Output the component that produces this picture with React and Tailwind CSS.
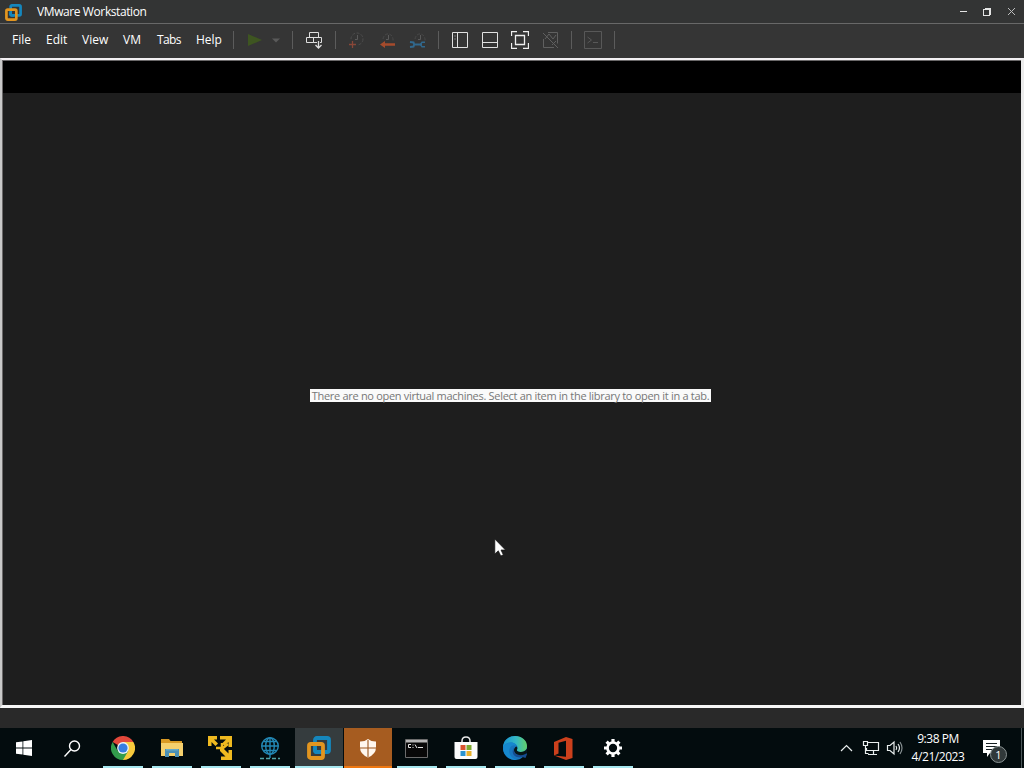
import clsx from 'clsx';

const menuItems = [
  { label: 'File', cell: 'w-[34px]' },
  { label: 'Edit', cell: 'w-[36px]' },
  { label: 'View', cell: 'w-[41px]' },
  { label: 'VM', cell: 'w-[34px]' },
  { label: 'Tabs', cell: 'w-[39px] tracking-[-0.6px]' },
  { label: 'Help', cell: 'w-[37px]' }
];

function Separator({ className }) {
  return (
    <div className={clsx('shrink-0', className)}>
      <div className="w-px h-[18px] bg-[#5c5c5c]" />
    </div>
  );
}

function Tool({ className, size = 18, children }) {
  return (
    <button className={clsx('shrink-0 flex items-center', className)}>
      <svg width={size} height={size} viewBox={`0 0 ${size} ${size}`} fill="none" className="shrink-0">
        {children}
      </svg>
    </button>
  );
}

function VMwareLogo({ size }) {
  return (
    <svg width={size} height={size} viewBox="0 0 24 24" fill="none" strokeWidth="3.8">
      <rect x="8" y="2" width="14" height="14" rx="1.8" stroke="#1587bd" />
      <rect x="2" y="8" width="14" height="14" rx="1.8" stroke="#e2951f" />
      <path d="M8 11.500v2.700q0 1.800 1.800 1.800h3" stroke="#1587bd" />
    </svg>
  );
}

function TitleBar() {
  return (
    <header className="h-[24px] flex items-center bg-[#333434] border-b border-[#686868] text-white">
      <div className="w-[37px] pl-[5px] pt-px">
        <VMwareLogo size={17} />
      </div>
      <h1 className="flex-1 text-[12px] leading-[24px] tracking-[-0.4px]">VMware Workstation</h1>
      <svg width="72" height="22" viewBox="0 0 72 22" fill="none" stroke="#e4e4e4" shapeRendering="crispEdges">
        <path d="M8 10.5h7" />
        <path d="M31.5 8.5h6v6h-6zM32.500 7.500h6v6" />
        <path d="M56 7l7 7M63 7l-7 7" shapeRendering="auto" stroke="#bdbdbd" />
      </svg>
    </header>
  );
}

function Toolbar() {
  return (
    <nav className="h-[34px] pl-[12px] pb-[2px] flex items-center bg-[#353535] text-white">
      {menuItems.map(item => (
        <span key={item.label} className={clsx('shrink-0 text-[12px] leading-[18px] pb-px', item.cell)}>
          {item.label}
        </span>
      ))}
      <Separator className="w-[14px]" />
      <Tool className="w-[24px]">
        <path d="M1 3l14 6-14 6z" fill="#3e5521" />
      </Tool>
      <Tool className="w-[21px]">
        <path d="M1 7.500h8l-4 4z" fill="#5a5a5a" />
      </Tool>
      <Separator className="w-[14px]" />
      {/* Send Ctrl+Alt+Del */}
      <Tool className="w-[29px]">
        <path d="M3.500 1.500h9v5h-9zM.5 6.500h7v5h-7zM7.500 6.500h8v5h-8z" stroke="#dedede" />
        <path d="M12.500 9v8M9.500 14l3 3 3-3" stroke="#353535" strokeWidth="3" />
        <path d="M12.500 10v7M9.500 14l3 3 3-3" stroke="#dedede" strokeWidth="1.3" />
      </Tool>
      <Separator className="w-[13px]" />
      {/* Snapshot actions, disabled while no VM is open */}
      <Tool className="w-[31px]">
        <circle cx="9" cy="8" r="6" stroke="#4c4c4c" strokeDasharray="3 1.500" />
        <path d="M9.500 4v4.500H7" stroke="#5a5a5a" />
        <path d="M0 9h9v8H0z" fill="#353535" />
        <path d="M4.500 10v7M1 13.500h7" stroke="#894738" strokeWidth="1.3" />
      </Tool>
      <Tool className="w-[30px]">
        <path d="M4 8A5 6 0 1 1 14 10" stroke="#494949" strokeDasharray="3 1.500" />
        <path d="M9.500 4v4.500H7" stroke="#5a5a5a" />
        <path d="M1 13.500l5-3.500v2.300h10v2.500H6V17z" fill="#a54b2c" />
      </Tool>
      <Tool className="w-[29px]">
        <path d="M6 8A5 6 0 1 1 16 10" stroke="#494949" strokeDasharray="3 1.500" />
        <path d="M11.500 4v4.500H9" stroke="#5a5a5a" />
        <path d="M1 11l3.500.5.7 2-.7 2L1 16M5 13.500h8" stroke="#31688d" strokeWidth="2" />
        <path d="M16 11.200h-3l-1.500 2.300 1.500 2.300h3" stroke="#31688d" strokeWidth="1.500" />
      </Tool>
      <Separator className="w-[14px]" />
      <Tool className="w-[30px]">
        <path d="M.5 1.500h15v15H.5zM5.500 1.500v15" stroke="#e1e1e1" />
        <path d="M2 5h2M2 8h2" stroke="#777" />
      </Tool>
      <Tool className="w-[29px]">
        <path d="M.5 1.500h15v15H.5zM.5 11.500h15" stroke="#e1e1e1" />
      </Tool>
      <Tool className="w-[31px]">
        <path d="M.5 5V.5H6M12 .5h5.500V5M17.500 12v5.500H12M6 17.500H.5V12M4.500 4.500h9v9h-9z" stroke="#efefef" strokeWidth="1.300" />
      </Tool>
      <Tool className="w-[29px]">
        <path d="M6 1.500h9.500v11M1.500 8v8.500H12M1 2l15 15M3 8l4-5 4 5 3-4M10 14l4-4" stroke="#606060" />
      </Tool>
      <Separator className="w-[13px]" />
      <Tool className="w-[30px]">
        <path d="M.5.5h17v17H.5zM3.500 6l4 3-4 3M9 11.500h5" stroke="#585858" />
      </Tool>
      <Separator />
    </nav>
  );
}

function Workspace() {
  return (
    <main className="flex-1 min-h-0 flex flex-col bg-[#1e1e1e] border-t-2 border-r-[3px] border-b-[3px] border-l-2 border-t-[#f2eff2] border-r-[#ebebeb] border-b-[#f7f7f7] border-l-[#c9c9c9]">
      <div className="flex-1 flex flex-col border-t border-l border-[#6a6869]">
        <div className="h-[32px] bg-black" />
        <div className="flex-1 flex justify-center pt-[296px]">
          <p className="-ml-[3px] w-[401px] h-[13px] bg-[#fafafa] text-[#777] text-[11px] leading-[14px] text-center whitespace-nowrap tracking-[-0.302px]">
            There are no open virtual machines. Select an item in the library to open it in a tab.
          </p>
        </div>
      </div>
    </main>
  );
}

function ChromeIcon() {
  return (
    <svg width="24" height="24" viewBox="0 0 24 24">
      <path d="M12 12L1.600 6a12 12 0 0 1 20.800 0z" fill="#e2483b" />
      <path d="M12 12V6h10.400A12 12 0 0 1 12 24z" fill="#f8ca3c" />
      <path d="M12 12l5.200 3L12 24A12 12 0 0 1 1.600 6l5.200 9z" fill="#339c4c" />
      <circle cx="12" cy="12" r="5.900" fill="#edf2f8" />
      <circle cx="12" cy="12" r="4.600" fill="#377de0" />
    </svg>
  );
}

function ExplorerIcon() {
  return (
    <svg width="22" height="20" viewBox="0 0 22 20">
      <path d="M0 1h8l1.500 2H21v15H0z" fill="#d99a24" />
      <path d="M0 5h22v13H0z" fill="#f5d06d" />
      <path d="M4 19v-8h14v8h-4v-4H8v4z" fill="#4c91b6" />
      <path d="M5 11h12v1.500H5z" fill="#67aac8" />
    </svg>
  );
}

function PlayerIcon() {
  return (
    <svg width="25" height="25" viewBox="0 0 25 25">
      <path d="M0 0h9v3.500H6l4 4-2.500 2.500-4-4v4H0zM12 0h12v11h-3.500V6l-4 4L14 7.500l4-4h-6zM24 14v10H13v-3.500h4.500L12 15v-3h3l5.500 5.500V14z" fill="#efba20" />
      <path d="M8 12h6M14 7v7M15 12l5-4" stroke="#efba20" strokeWidth="2.500" />
    </svg>
  );
}

function NetworkEditorIcon() {
  return (
    <svg width="20" height="23" viewBox="0 0 20 23" fill="none" stroke="#2388b5" strokeWidth="1.400">
      <circle cx="10" cy="9" r="8.300" />
      <ellipse cx="10" cy="9" rx="4.300" ry="8.300" />
      <path d="M10 1v20M2 9h16M3.500 4.500h13M3.500 13.500h13" />
      <path d="M0 21.500h20" stroke="#52a3a6" strokeDasharray="4 2" />
    </svg>
  );
}

function ShieldIcon() {
  return (
    <svg width="18" height="19" viewBox="0 0 18 19">
      <path d="M9 0q3.500 2.700 8 2.500v6Q17 15 9 18.500 1 15 1 8.500v-6Q5.500 2.700 9 0z" fill="#fff7ee" />
      <path d="M9 1v17M1 9h16" stroke="#9b571e" strokeWidth="1.100" />
    </svg>
  );
}

function TerminalIcon() {
  return (
    <svg width="23" height="19" viewBox="0 0 23 19">
      <path d="M.5.5h22v18H.5z" fill="#080808" stroke="#6c6c6c" />
      <path d="M1 1h21v2.500H1z" fill="#b5b5b5" />
      <path d="M6 5.500H3.500v3H6M8 5.500v1M8 8v1M10 5.500l2 3.500M13 8.500h5" stroke="#e4e4e4" fill="none" />
    </svg>
  );
}

function StoreIcon() {
  return (
    <svg width="24" height="24" viewBox="0 0 24 24">
      <path d="M8 7V5q0-4 4-4t4 4v2" fill="none" stroke="#e9e9e9" strokeWidth="1.500" />
      <path d="M.5 6h23v15q0 2-2 2h-19q-2 0-2-2z" fill="#fcfcfc" />
      <path d="M6.500 9h5v5h-5z" fill="#d9532e" />
      <path d="M12.500 9h5v5h-5z" fill="#7da92e" />
      <path d="M6.500 15h5v5h-5z" fill="#2b93cf" />
      <path d="M12.500 15h5v5h-5z" fill="#e9b12c" />
    </svg>
  );
}

function EdgeIcon() {
  return (
    <svg width="24" height="24" viewBox="0 0 24 24">
      <defs>
        <linearGradient id="edge-wave" x1="0" y1="0.500" x2="1" y2="0.500">
          <stop offset="0" stopColor="#1793d2" />
          <stop offset="0.550" stopColor="#35b9c4" />
          <stop offset="1" stopColor="#63cf68" />
        </linearGradient>
      </defs>
      <circle cx="12" cy="12" r="12" fill="#1775bd" />
      <path d="M0 12C0 4.500 5.500 0 12 0c7 0 12 4.500 12 10 0 4-3 6-6.500 6-3 0-4-1.300-3.500-2.500C16 10 12 6.500 8 6.500 4 6.500.8 9 0 12z" fill="url(#edge-wave)" />
      <path d="M8.500 10C3 15 8 23 14 23.800 8 25 0 20 0 12c1-4 5-5.500 8-5.500 3 0 5 1.500 5.500 3.500-2-1.300-3.500-1-5 0z" fill="#1688ce" />
      <path d="M11 11.500c-2 5 3 9.500 11 6.500l2.500-1-2 5-3-1C13 23 7 18 11 11.500z" fill="#164c91" />
      <path d="M14 13.500c-.5 1.200.5 2.500 3.500 2.500 2.500 0 5-1 6.300-3.300.5 2 0 4-1.300 5.300-6 3-11.500 0-11.500-4 0-1.500 1-3 2.500-3.500 1 .8 1 2 .5 3z" fill="#071517" />
    </svg>
  );
}

function OfficeIcon() {
  return (
    <svg width="19" height="23" viewBox="0 0 19 23">
      <path d="M0 5l12-5 6.500 2v19L12 23 0 18.500l12 1.300V3.800L4.500 5.700v10.800L0 18.500z" fill="#cc401c" />
    </svg>
  );
}

function GearIcon() {
  return (
    <svg width="20" height="20" viewBox="0 0 20 20" fill="none" stroke="#fff">
      <circle cx="10" cy="10" r="5.500" strokeWidth="2.700" />
      <path d="M10 1v3M10 16v3M1 10h3M16 10h3M3.600 3.600l2.200 2.200M14.200 14.200l2.200 2.200M3.600 16.400l2.200-2.200M14.200 5.800l2.200-2.200" strokeWidth="3.200" />
    </svg>
  );
}

const apps = [
  { name: 'chrome', icon: <ChromeIcon /> },
  { name: 'explorer', icon: <ExplorerIcon /> },
  { name: 'player', icon: <PlayerIcon /> },
  { name: 'network', icon: <NetworkEditorIcon /> },
  { name: 'workstation', icon: <VMwareLogo size={24} />, state: 'active' },
  { name: 'security', icon: <ShieldIcon />, state: 'alert' },
  { name: 'terminal', icon: <TerminalIcon /> },
  { name: 'store', icon: <StoreIcon /> },
  { name: 'edge', icon: <EdgeIcon /> },
  { name: 'office', icon: <OfficeIcon /> },
  { name: 'settings', icon: <GearIcon /> }
];

function Taskbar() {
  return (
    <footer className="h-[40px] flex bg-[#030c0e] text-white">
      <button className="w-[48px] flex items-center justify-center">
        <svg width="16" height="16" viewBox="0 0 16 16" fill="#fff">
          <path d="M0 2.300l6.500-.9v6.100H0zM7.300 1.300L16 0v7.500H7.300zM0 8.400h6.500v6.200L0 13.700zM7.300 8.400H16V16l-8.700-1.200z" />
        </svg>
      </button>
      <button className="w-[50px] pr-[2px] flex items-center justify-center">
        <svg width="17" height="17" viewBox="0 0 17 17" fill="none" stroke="#fff" strokeWidth="1.400">
          <circle cx="10.500" cy="6" r="5" />
          <path d="M7 9.500l-6.500 7" />
        </svg>
      </button>

      {apps.map(app => (
        <div
          key={app.name}
          className={clsx(
            'w-[49px] shrink-0 flex flex-col items-center',
            app.state === 'active' && 'bg-[#353c3e] border-l border-[#030c0e]',
            app.state === 'alert' && 'bg-[#a65c20] border-l border-[#030c0e]'
          )}
        >
          <div className="h-[38px] pt-[2px] flex items-center">{app.icon}</div>
          <div
            className={clsx(
              'h-[2px]',
              !app.state && 'w-[40px] bg-[#a6e7ef]',
              app.state === 'active' && 'w-full bg-[#a6e7ef]',
              app.state === 'alert' && 'w-full bg-[#ef7811]'
            )}
          />
        </div>
      ))}

      {/* System tray */}
      <div className="ml-auto flex items-center">
        <svg width="69" height="20" viewBox="0 0 69 20" fill="none" stroke="#e9eeee" strokeWidth="1.200">
          <path d="M1 13l5.500-5.500L12 13" />
          <path d="M28 4.500h10.500v8H28M26.500 10v2.500H30M33.500 13v3M28 16.500h9" />
          <path d="M23.500 3.500h4v4h-4zM25.500 8v7.500h3" />
          <path d="M47.500 7.500H50l4-3.500v12l-4-3.500h-2.500z" />
          <path d="M56 8q1.500 2 0 4M58 6q3 4 0 8" />
          <path d="M60 4q4 6 0 12" stroke="#879092" />
        </svg>
        <div className="w-[58px] text-center text-[12px] leading-[18px] tracking-[-0.45px]">
          <p>9:38 PM</p>
          <p>4/21/2023</p>
        </div>
        <div className="relative w-[50px] h-[40px] ml-[4px]">
          <svg width="18" height="18" viewBox="0 0 18 18" className="absolute left-[12px] top-[12px]">
            <path d="M0 0h17v13H7l-3 4v-4H0z" fill="#fff" />
            <path d="M3 3.500h11M3 6.500h11M3 9.500h7" stroke="#172023" strokeWidth="1" />
          </svg>
          <span className="absolute left-[19px] top-[18px] w-[17px] h-[17px] rounded-full bg-[#31393a] border border-[#8b9494] text-[11px] leading-[15px] text-center">
            1
          </span>
        </div>
        <div className="w-px h-[40px] mr-[2px] bg-[#4c5759]" />
      </div>
    </footer>
  );
}

export default function App() {
  return (
    <div className="relative w-[1024px] h-[768px] overflow-hidden flex flex-col bg-[#1e1e1e] font-['Open_Sans','Noto_Sans',sans-serif]">
      <TitleBar />
      <Toolbar />
      <Workspace />
      <div className="h-[20px] bg-[#292929]" />
      <Taskbar />

      {/* Mouse pointer */}
      <svg width="14" height="20" viewBox="0 0 14 20" className="absolute left-[494px] top-[538px]">
        <path d="M.8 1v15l3.500-3.200L6.800 18l2.500-1.200-2.300-4.800h4.500z" fill="#fff" stroke="#111" strokeWidth=".7" />
      </svg>
    </div>
  );
}
